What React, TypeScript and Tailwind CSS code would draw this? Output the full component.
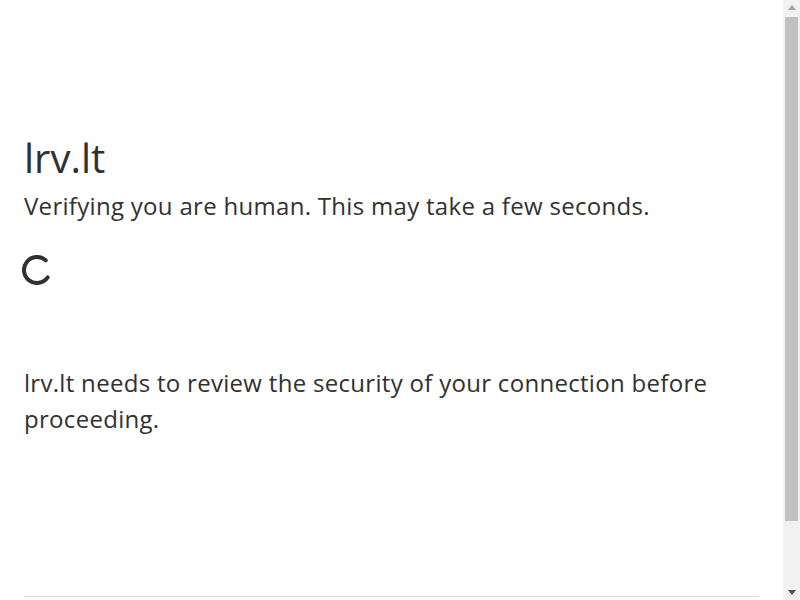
function Scrollbar() {
  return (
    <div className="w-[17px] h-screen flex-shrink-0 bg-[#f1f1f1] flex flex-col items-center">
      <div className="h-[15px] w-full flex items-center justify-center">
        <svg width="8" height="5" viewBox="0 0 8 5">
          <path d="M4 0 L8 5 L0 5 Z" fill="#a3a3a3" />
        </svg>
      </div>
      <div className="w-full px-[2px] h-[506px] pt-[2px]">
        <div className="w-full h-full bg-[#c1c1c1]" />
      </div>
      <div className="flex-1" />
      <div className="h-[15px] w-full flex items-center justify-center">
        <svg width="8" height="5" viewBox="0 0 8 5">
          <path d="M0 0 L8 0 L4 5 Z" fill="#505050" />
        </svg>
      </div>
    </div>
  );
}

export default function App() {
  return (
    <div className="h-screen flex bg-white text-[#313131] font-['Open_Sans','Noto_Sans',sans-serif] overflow-hidden">
      <div className="flex-1 min-w-0 flex flex-col overflow-hidden">
        {/* Main */}
        <div className="flex flex-col items-center">
          <div className="w-full max-w-[60rem] px-6 mt-[128px] mb-[159px]">
            <h1 className="text-[40px] leading-[60px] font-normal">lrv.lt</h1>
            <h2 className="text-[24px] leading-[36px] font-normal tracking-[0.3px]">
              Verifying you are human. This may take a few seconds.
            </h2>
            <div className="mt-[31px] -ml-0.5 h-[31px]">
              <svg width="30" height="30" viewBox="0 0 30 30" fill="none">
                <path
                  d="M25.65 22.46 A13 13 0 1 1 23.7 5.34"
                  stroke="#313131"
                  strokeWidth="4"
                  strokeLinecap="round"
                />
              </svg>
            </div>
            <p className="mt-[79px] text-[24px] leading-[36px] tracking-[0.3px]">
              lrv.lt needs to review the security of your connection before proceeding.
            </p>
          </div>
        </div>

        {/* Footer */}
        <div className="w-full max-w-[60rem] mx-auto px-6">
          <div className="border-t border-[#d9d9d9] h-[81px]" />
        </div>
      </div>
      <Scrollbar />
    </div>
  );
}
